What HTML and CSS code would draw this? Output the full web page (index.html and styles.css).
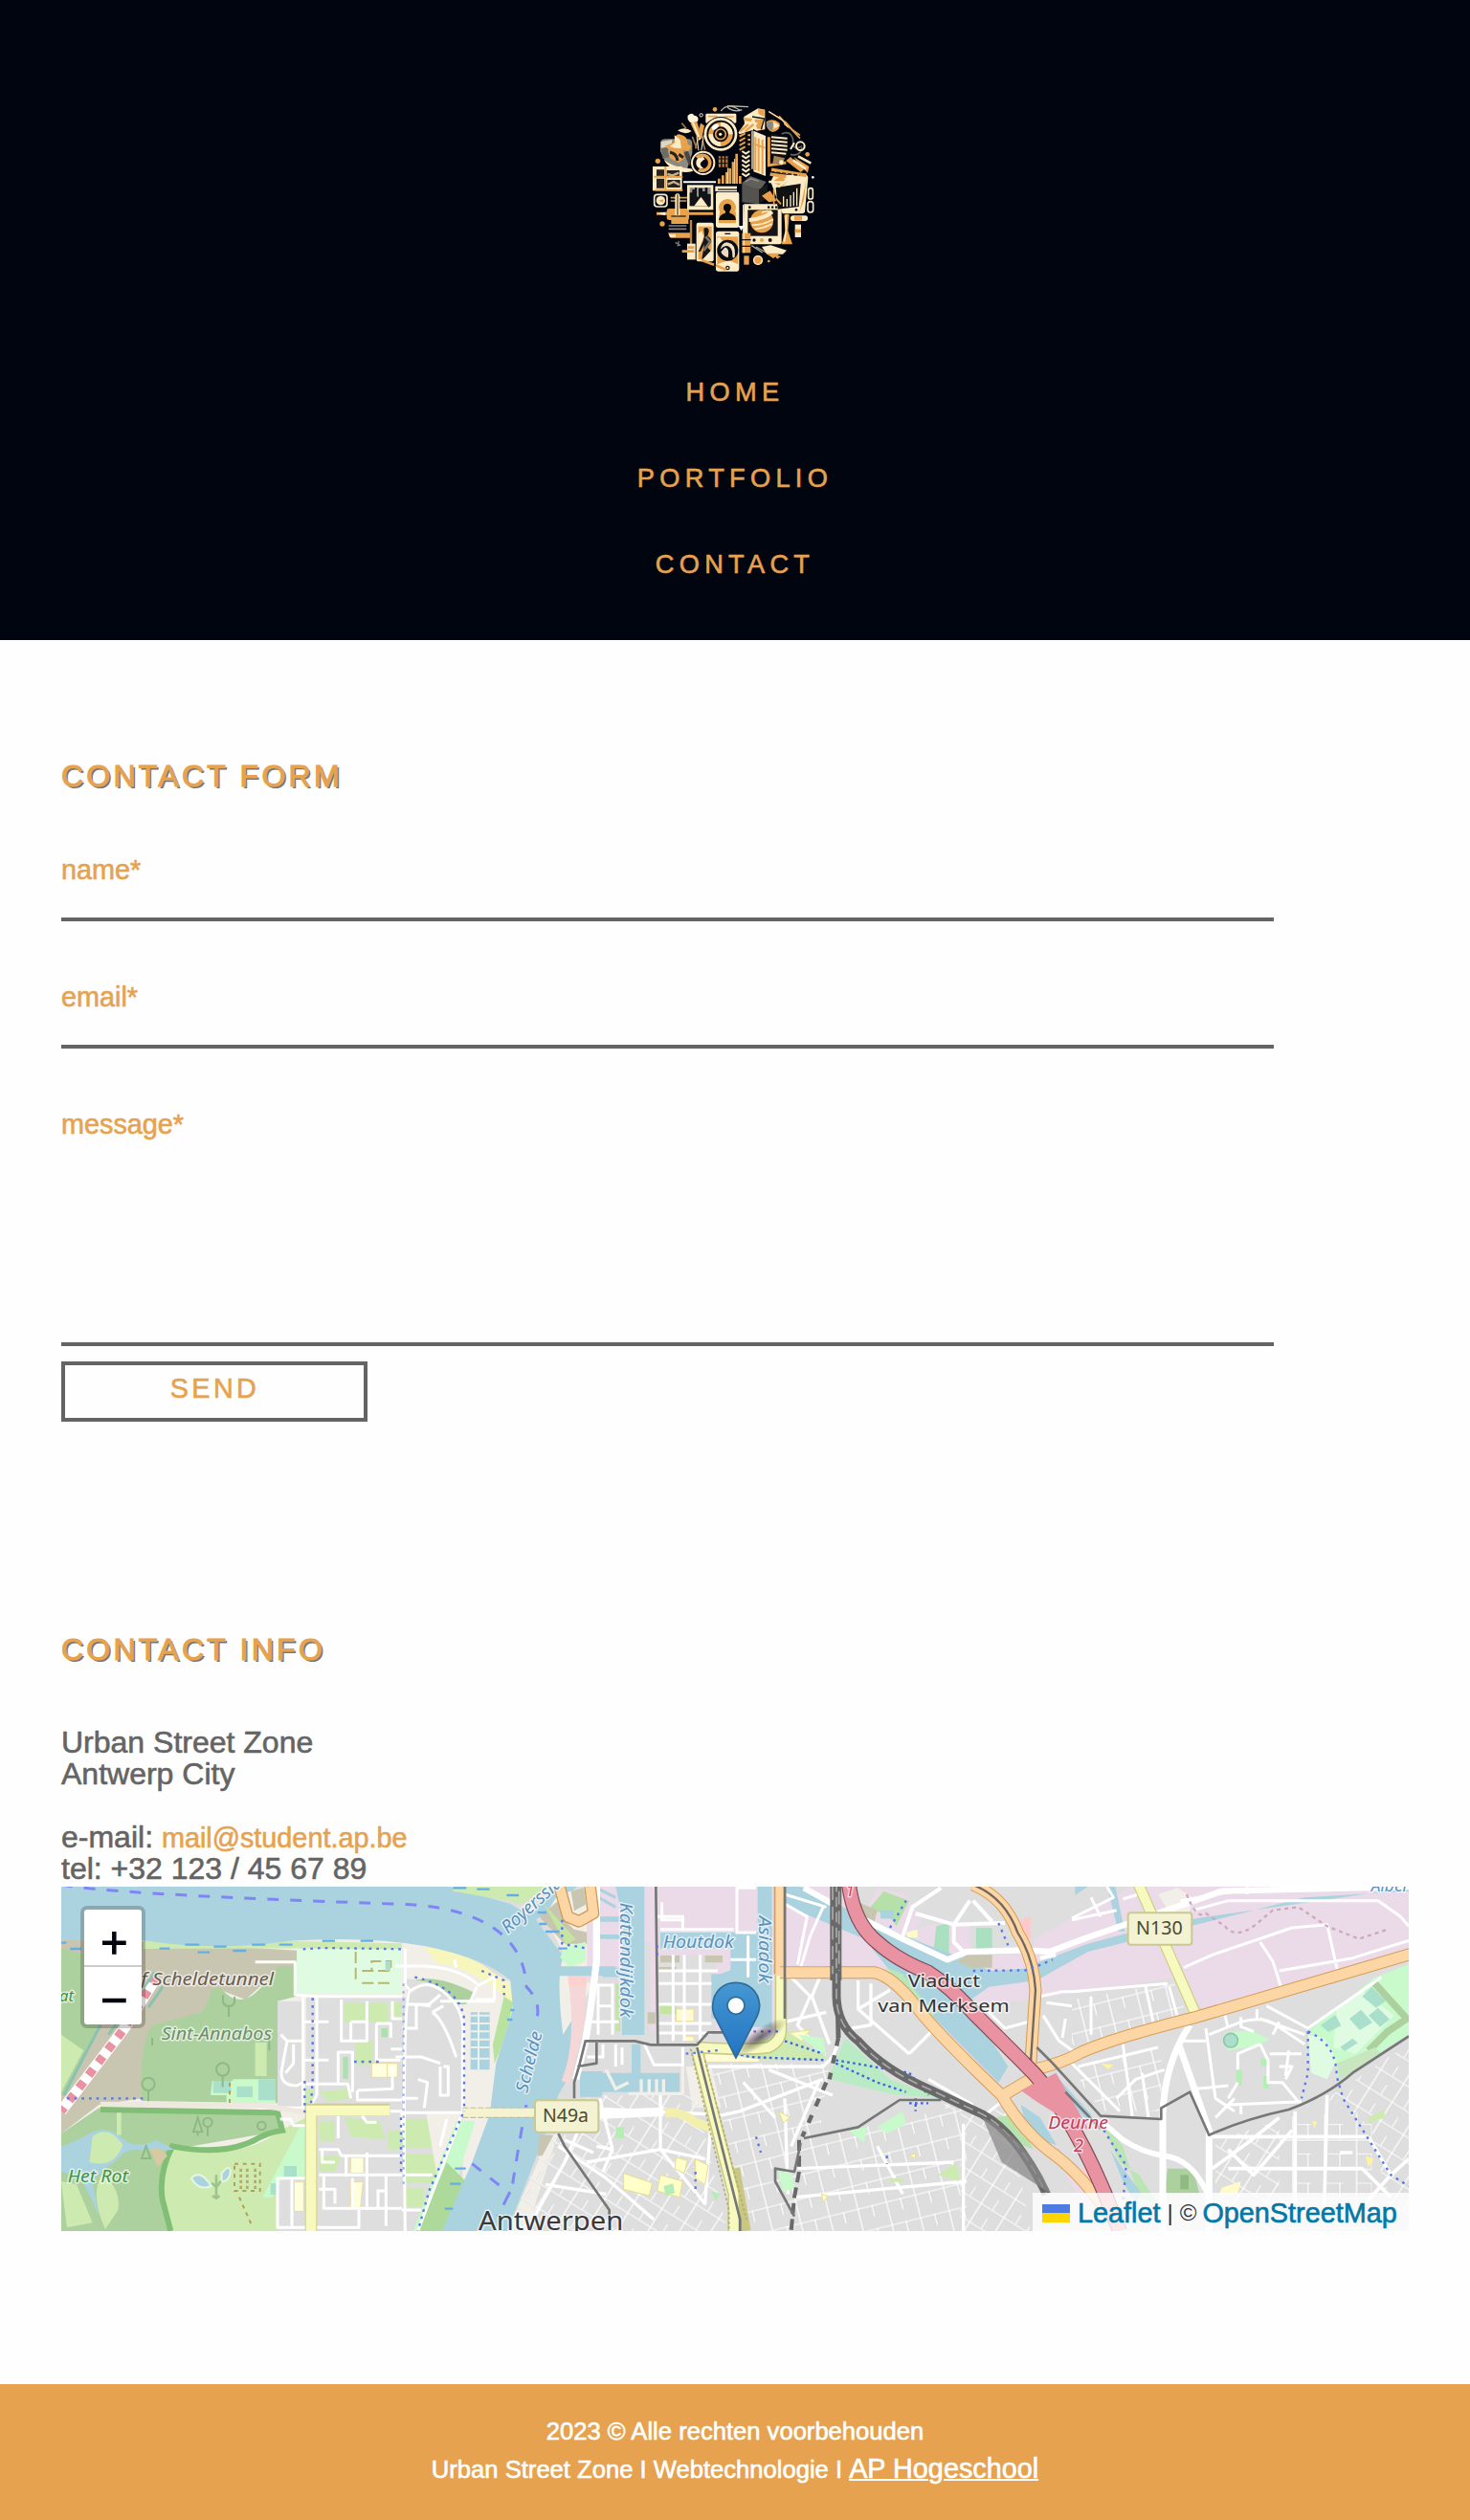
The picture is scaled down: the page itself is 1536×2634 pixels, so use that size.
FILE: index.html
```html
<!DOCTYPE html>
<html lang="nl">
<head>
<meta charset="utf-8">
<title>Urban Street Zone - Contact</title>
<link rel="stylesheet" href="styles.css">
</head>
<body>
<header class="site-header">
<svg class="logo" viewBox="-6 0 660 630" role="img" aria-label="Urban Street Zone">
  <!-- camera and top row -->
  <g stroke-linejoin="round">
  <circle cx="261" cy="73" r="7" fill="#e9a24c"/>
  <path d="M280 78Q300 50 340 76M300 62l66 3M300 66q20 18 46 8" fill="none" stroke="#bbb6a6" stroke-width="4"/>
  <path d="M352 96l44-26 22 4v62l-26 4-38-20z" fill="#fdebc6"/>
  <path d="M396 72l20 2v22l-18-8zM350 98l28 4-4 10-22-4zM385 104h26v30h-18z" fill="#e9a24c"/>
  <path d="M378 96l38 6-10 34" fill="none" stroke="#141414" stroke-width="4"/>
  <path d="M334 146l20-28 42-4-20 30-36 8z" fill="#fdebc6"/><path d="M340 142l26-22M356 142l26-22" stroke="#e9a24c" stroke-width="7"/>
  <rect x="232" y="86" width="96" height="30" rx="4" fill="#fdebc6"/>
  <path d="M240 95h28M290 96h30" stroke="#e9a24c" stroke-width="5"/>
  <circle cx="279" cy="151" r="55" fill="#080a10"/><circle cx="279" cy="151" r="48" fill="none" stroke="#fdebc6" stroke-width="8"/>
  <circle cx="279" cy="151" r="38" fill="#e9a24c"/><path d="M279 113a38 38 0 0 1 38 38h-20a20 20 0 0 0-18-20zM279 189a38 38 0 0 1-38-38h18a20 20 0 0 0 20 20z" fill="#fdebc6"/>
  <circle cx="279" cy="151" r="24" fill="#0a0a10"/><circle cx="279" cy="151" r="16" fill="none" stroke="#e9a24c" stroke-width="5"/><circle cx="278" cy="151" r="5" fill="#fdebc6"/><ellipse cx="262" cy="128" rx="12" ry="7" fill="#fff" transform="rotate(-35 262 128)"/>
  <path d="M176 92q14-12 20 0q16 2 12 16q-6 12-20 8q-16-8-12-24z" fill="#fff4d9"/><path d="M184 116l20-6 18 52-12 8z" fill="#e9a24c"/><path d="M192 114l22 54" stroke="#fdebc6" stroke-width="6"/>
  <path d="M216 116l12 8-8 40-10-24z" fill="#e9a24c"/><circle cx="218" cy="91" r="5" fill="none" stroke="#fdebc6" stroke-width="3"/>
  <path d="M144 139q24-14 44 2q-20 14-44-2z" fill="#fdebc6"/><path d="M157 116l14 17M190 158l14 38M210 160l-10 36M222 170l8 30" stroke="#a77a42" stroke-width="5"/><path d="M204 158l6 44M226 154l-8 50" stroke="#fdebc6" stroke-width="3"/>
  <path d="M430 80l54 34 36 42M462 94l66 70M478 118l50 36" fill="none" stroke="#e9a24c" stroke-width="5"/><path d="M430 80l40 24 20 26" fill="none" stroke="#fdebc6" stroke-width="3"/>
  <path d="M422 112q20-14 42 4q4 22-22 28q-22-6-20-32z" fill="#e9a24c"/><path d="M424 113q18-8 20 6l-4 22q-20-10-16-28z" fill="#8a8a84"/><path d="M444 110l20 14-18 10z" fill="#fdebc6"/>
  <path d="M470 150q28-14 36 18q-2 40 28 20M498 214q30 8 36-22" fill="none" stroke="#65645e" stroke-width="5"/><circle cx="529" cy="188" r="13" fill="none" stroke="#fdebc6" stroke-width="6"/><path d="M510 178l-12 20" stroke="#fdebc6" stroke-width="6"/>
  </g>
  <!-- towers -->
  <path d="M382 140l38 16v126l-38-14z" fill="#fdebc6"/><path d="M388 160v104M398 164v104M410 168v108" stroke="#e9a24c" stroke-width="6"/><path d="M384 182l34 12" stroke="#e9a24c" stroke-width="6"/>
  <path d="M334 152l44-14v138l-36-4z" fill="#0b0c10"/><path d="M378 140v120" stroke="#fdebc6" stroke-width="4"/>
  <path d="M338 158l18-10M338 172l18-10M338 186l18-10M338 200l18-10M364 154h8M364 168h8M364 182h8" stroke="#e9a24c" stroke-width="6"/>
  <path d="M346 204l12 8 12-8M346 218l12 8 12-8M346 232l12 8 12-8M346 246l12 8 12-8M346 260l12 8 12-8M346 274l12 8 12-8" fill="none" stroke="#fdebc6" stroke-width="6"/>
  <path d="M424 158l16-12 50 20v48l-20 26-46-28z" fill="#0e0d0d"/><path d="M438 160l50 4M438 172l50 4M438 184l50 4M438 196l50 4M438 208l46 4" stroke="#fdebc6" stroke-width="6"/><path d="M430 160v88l54-8" fill="none" stroke="#e9a24c" stroke-width="9"/>
  <path d="M446 218l34 8-8 22-30-6z" fill="#a18259"/><circle cx="469" cy="239" r="7" fill="#fdebc6"/>
  <path d="M484 234l14-12 42 40-10 8zM508 222l48 30-4 20-30-30z" fill="#e9a24c"/><path d="M506 232l40 28M522 220l40 22" stroke="#fdebc6" stroke-width="8"/><circle cx="551" cy="214" r="7" fill="#e9a24c"/>
  <!-- figure with hat -->
  <path d="M90 180q0-14 16-14h70q14 0 14 14v30l-16 50h-32l-36-20-16-36z" fill="#8d8a80"/><path d="M92 174l36-6-4 20-32 6z" fill="#ddd7c6"/><path d="M92 196l20-4 6 30-20 6z" fill="#6d6b66"/>
  <path d="M132 176q4-30 22-24q22 4 22 30l12 6q-8 22-20 14l-50-2-14-12z" fill="#e9a24c"/><path d="M134 154l18 14 4 26q-20 4-36-6l16-10z" fill="#fdebc6"/>
  <path d="M114 202l48-2 4 26-18 14-28-14z" fill="#e9a24c"/><path d="M120 208q20 2 24 26M148 214l14 10" fill="none" stroke="#222" stroke-width="9"/><path d="M102 232q32 26 100 28q-20 16-58 6q-30-10-42-34z" fill="#fdebc6"/><path d="M170 206l16 40" stroke="#4a4742" stroke-width="14"/>
  <circle cx="82" cy="235" r="8" fill="#e9a24c"/>
  <circle cx="224" cy="241" r="40" fill="#0a0b11"/><circle cx="224" cy="241" r="35" fill="none" stroke="#fdebc6" stroke-width="6"/><path d="M204 224a24 24 0 1 1 6 38" fill="none" stroke="#e9a24c" stroke-width="11"/><path d="M224 222q-24 0-22 22q4 18 24 14q-16-10-8-20q8-8 16-2z" fill="#fdebc6"/><circle cx="230" cy="238" r="8" fill="#080910"/>
  <!-- bars -->
  <path d="M276 220v34M287 220v34M298 220v34" stroke="#b37b3a" stroke-width="7"/><path d="M270 228h32M270 242h32" stroke="#14100a" stroke-width="3"/>
  <path d="M274 306v-16M286 306v-26M298 306v-36M308 306v-48M318 306v-68M329 306v-94M340 306v-24" stroke="#e9a24c" stroke-width="8"/><path d="M302 306v-50M323 306v-78" stroke="#fdebc6" stroke-width="3"/>
  <path d="M162 301h102" stroke="#fff" stroke-width="6"/>
  <!-- left shelf, clock, tools -->
  <path d="M66 252h92v76H66z" fill="#fdebc6"/><path d="M78 262h24v20H78zM78 290h24v30H78zM110 264h40v22h-40zM112 294h40v24h-40z" fill="#25221f"/><path d="M74 326h86M70 284h90M106 252v76" stroke="#e9a24c" stroke-width="6"/><path d="M112 276l16 4 20-8M114 308l18-8 18 10" stroke="#c9b48c" stroke-width="7" fill="none"/>
  <rect x="71" y="340" width="40" height="38" rx="9" fill="none" stroke="#fdebc6" stroke-width="5"/><circle cx="91" cy="359" r="14" fill="#fdebc6"/><path d="M83 359l16-4v10z" fill="#e9a24c"/>
  <path d="M122 350h52M122 360h50" stroke="#c89a5a" stroke-width="5"/><path d="M78 400h178" stroke="#e9a24c" stroke-width="9"/><path d="M80 400l26-5v10z" fill="#fff"/><rect x="110" y="384" width="70" height="36" rx="8" fill="#e9a24c"/><rect x="124" y="400" width="54" height="32" fill="#e9a24c"/><rect x="136" y="337" width="15" height="72" rx="7" fill="#fdebc6"/><path d="M144 340v64" stroke="#8b6331" stroke-width="5"/><path d="M124 408h46" stroke="#2e261c" stroke-width="4"/>
  <circle cx="96" cy="432" r="8" fill="#e9a24c"/><path d="M116 438h56M116 448h56" stroke="#85807a" stroke-width="5"/><path d="M114 460h72v16h-64z" fill="#e9a24c"/><path d="M116 464h22v10h-18z" fill="#fdebc6"/><path d="M137 490l16 10M148 486l-4 16" stroke="#7e7d7a" stroke-width="4"/><path d="M186 420v110" stroke="#b98543" stroke-width="7"/><rect x="174" y="494" width="26" height="50" fill="#fdebc6"/><path d="M158 518h38M176 506h20" stroke="#e9a24c" stroke-width="8"/>
  <!-- pictures -->
  <rect x="174" y="310" width="82" height="78" fill="#fdebc6"/><path d="M182 318h66v58h-66z" fill="#96938a"/><path d="M182 346v-12h8v-10h8v-6h6v30h6v-28h12v10h8v-12h8v20h10v38h-66z" fill="#10131a"/><path d="M196 376l16-22 8-8 8 10 12 20z" fill="#fdebc6"/><path d="M206 346l-20 28M218 342l26 36" stroke="#141414" stroke-width="7"/>
  <path d="M262 314h68v16h-68z" fill="#fdebc6"/><path d="M270 324h60" stroke="#26221d" stroke-width="4"/><rect x="264" y="332" width="73" height="112" rx="7" fill="#fdebc6"/><path d="M270 342h61v90h-61z" fill="#fff0cd"/><circle cx="300" cy="381" r="27" fill="#e9a24c"/><path d="M276 394h51v36h-55z" fill="#e9a24c"/><circle cx="300" cy="381" r="12" fill="#090a0c"/><path d="M294 388h13v10q20 4 20 22h-54q2-18 21-22z" fill="#090a0c"/>
  <path d="M346 304l26-22 50 18-18 24-50-6z" fill="#605f5b"/><path d="M346 306l54 18v46l-54-6z" fill="#55534f"/><path d="M400 324l26-18v46l-26 16z" fill="#1a1a1b"/><path d="M356 300l18-10 24 8" fill="none" stroke="#9b968d" stroke-width="4"/>
  <path d="M352 370h112q6 0 6 6v114q0 6-6 6H356q-6 0-6-6z" fill="#fdebc6"/><path d="M364 388h94v82h-94z" fill="#151313"/><circle cx="408" cy="424" r="36" fill="#e9a24c"/><path d="M368 414q48-4 68-26l8 12q-26 22-76 26z" fill="#fdebc6"/><path d="M378 436q34 0 66-18M386 448q28-2 54-16M408 398q18-14 34 0" stroke="#fdebc6" stroke-width="5" fill="none"/><circle cx="370" cy="380" r="4" fill="#15130f"/><path d="M426 380h30" stroke="#1a1510" stroke-width="7" stroke-dasharray="7 5"/><circle cx="384" cy="483" r="5" fill="#111"/><circle cx="408" cy="483" r="6" fill="#e9a24c"/><circle cx="434" cy="483" r="6" fill="#111"/><path d="M350 372v118" stroke="#fff" stroke-width="3"/>
  <!-- tablet on the right -->
  <path d="M436 300l10-22 98 0q9 0 9 10l-10 106q-2 6-10 6h-60z" fill="#fdebc6"/><path d="M438 262l110 18M434 276l50 8" stroke="#e9a24c" stroke-width="11"/><path d="M436 268l90 12" stroke="#1d1914" stroke-width="4" stroke-dasharray="12 6"/><path d="M452 318l78-12-6 72-66 8z" fill="#111"/><path d="M476 378v-32M487 378v-24M498 378v-36M508 376v-44M518 376v-56" stroke="#fdebc6" stroke-width="4"/><path d="M440 300l28-18 20 16-16 18zM548 290l-8 68-14 38" fill="#e9a24c"/><path d="M430 300l48 2-18 14M470 308l20-18" stroke="#fdebc6" stroke-width="7" fill="none"/>
  <path d="M408 344l26-16 20 32-24 4z" fill="#e9a24c"/><path d="M446 322v48M452 352l16 18" stroke="#e9a24c" stroke-width="5"/><rect x="554" y="320" width="14" height="34" rx="7" fill="none" stroke="#fdebc6" stroke-width="5"/><rect x="552" y="362" width="17" height="34" rx="8" fill="none" stroke="#fdebc6" stroke-width="5"/><circle cx="568" cy="286" r="4" fill="#fff"/><circle cx="516" cy="388" r="4" fill="#111"/>
  <path d="M478 404q12-6 16 0l-4 50 14 42h-34l12-44z" fill="#e9a24c"/><path d="M484 404v52l-6 34" stroke="#fdebc6" stroke-width="5" fill="none"/><rect x="498" y="406" width="54" height="17" rx="8" fill="#fdebc6"/><path d="M510 406h24v16h-24z" fill="#e9a24c"/><rect x="512" y="434" width="19" height="40" fill="#fdebc6"/><path d="M512 454h19" stroke="#e9a24c" stroke-width="11"/>
  <!-- lower row -->
  <rect x="203" y="428" width="54" height="122" rx="6" fill="#fdebc6"/><path d="M209 440h42v104h-42z" fill="#e9a24c"/><path d="M226 446q16-6 16 10l-4 14q14 8 10 20l-10 16 14 14-20 22h-12l8-46-12 22-8 2 16-34 4-16z" fill="#17171a"/><path d="M208 462l12-8 6 18-18 50zM220 546l34-36v36z" fill="#fdebc6"/><path d="M232 472l14 16-20 28" fill="none" stroke="#76726a" stroke-width="8"/>
  <rect x="264" y="455" width="73" height="126" rx="8" fill="#fdebc6"/><rect x="268" y="472" width="65" height="86" fill="#e9a24c"/><path d="M270 558h62l-28-12zM276 474l10 12-18 20v-30z" fill="#fff0cd"/><circle cx="301" cy="515" r="33" fill="#090b0f"/><path d="M278 512q10-34 36-16q18 14 0 44q6-24-8-36q-14-8-28 8zM292 506q16 0 10 32q-18-6-22-18z" fill="#e9dbc2"/><path d="M308 496q18 16 12 42" fill="none" stroke="#fdebc6" stroke-width="5"/><path d="M292 463h18" stroke="#1a1611" stroke-width="4"/><circle cx="301" cy="570" r="7" fill="#1a1611"/><circle cx="301" cy="570" r="3" fill="#fff"/>
  <path d="M334 438h18l-8 16z" fill="#fff"/><rect x="346" y="461" width="27" height="62" fill="#e9a24c"/><path d="M352 461v62" stroke="#fdebc6" stroke-width="4"/><path d="M344 482h30M344 502h30" stroke="#16120f" stroke-width="4"/><rect x="352" y="532" width="16" height="28" fill="#e9a24c"/><circle cx="396" cy="546" r="15" fill="#e9a24c"/><circle cx="396" cy="546" r="13" fill="none" stroke="#fdebc6" stroke-width="4"/>
  <path d="M376 500l34 22M390 504l32 18" stroke="#aba69c" stroke-width="4"/><path d="M408 504l28-5 50 16-12 12h-50z" fill="#fdebc6"/><path d="M420 524h48l-24 16zM448 529l20 5-12 8z" fill="#e9a24c"/><circle cx="430" cy="549" r="4" fill="#e9a24c"/><path d="M220 546l38 14M264 562l32 14" stroke="#e9a24c" stroke-width="8"/>
</svg>
<nav><ul class="menu"><li><a href="#">HOME</a></li><li><a href="#">PORTFOLIO</a></li><li><a href="#">CONTACT</a></li></ul></nav>
</header>
<main class="content">
<section class="form-section">
<h2>CONTACT FORM</h2>
<form>
<div class="field"><label>name*</label></div>
<div class="field"><label>email*</label></div>
<div class="field field-message"><label>message*</label></div>
<button class="send" type="button">SEND</button>
</form>
</section>
<section class="info-section">
<h2>CONTACT INFO</h2>
<address>Urban Street Zone<br>Antwerp City<br><br>e-mail: <a href="#">mail@student.ap.be</a><br>tel: +32 123 / 45 67 89</address>
<div class="map">
<svg class="map-canvas" viewBox="42 36 4224 1080">
  <defs>
    <pattern id="grid-a" width="92" height="74" patternUnits="userSpaceOnUse" patternTransform="rotate(-14)"><path d="M0 3H92M3 0V74M48 0V38" stroke="#d0d0d0" stroke-width="8"/><path d="M0 3H92M3 0V74M48 0V38" stroke="#fafafa" stroke-width="5"/></pattern>
    <pattern id="grid-b" width="84" height="68" patternUnits="userSpaceOnUse" patternTransform="rotate(32)"><path d="M0 3H84M3 0V68M44 34V68" stroke="#d0d0d0" stroke-width="8"/><path d="M0 3H84M3 0V68M44 34V68" stroke="#fafafa" stroke-width="5"/></pattern>
    <pattern id="grid-c" width="100" height="92" patternUnits="userSpaceOnUse"><path d="M0 3H100M3 0V92M50 46V92M3 46H60" stroke="#d0d0d0" stroke-width="8" fill="none"/><path d="M0 3H100M3 0V92M50 46V92M3 46H60" stroke="#fafafa" stroke-width="5" fill="none"/></pattern>
    <path id="moto" d="M2510 20Q2524 150 2600 210Q2660 265 2760 305Q2830 350 2900 430L3060 590Q3220 740 3360 1116"/>
    <path id="ring" d="M2295 305H2590Q2650 318 2720 410Q2790 500 2990 690Q3060 810 3160 880Q3240 940 3340 1080"/>
    <path id="east" d="M3090 610Q3180 590 3240 555Q3340 510 3600 445L4060 310L4280 245"/>
    <path id="north" d="M2900 30Q3000 70 3040 180Q3090 260 3096 360L3080 600"/>
    <path id="rail" d="M2472 20V380Q2474 470 2540 520Q2620 610 2760 670L2930 750Q3040 810 3130 1000"/>
  </defs>
  <rect x="42" y="36" width="4224" height="1080" fill="#dedede"/>
  <!-- land use, west bank -->
  <path d="M42 200H1200L1460 340V900L1200 1116H42z" fill="#f2efe9"/>
  <path d="M42 200L300 208L780 236V285L720 300L620 390L540 360L480 430L330 480L294 700L160 720L42 810z" fill="#c8c5b0"/>
  <path d="M42 228Q100 250 165 256L175 430L60 690H42z" fill="#add19e"/><path d="M42 500l70 50-70 130z" fill="#cdebb0"/>
  <path d="M540 350Q600 430 670 350L725 285H778V380L720 395V715L294 708V590Q300 500 330 470L480 430Q510 395 512 360z" fill="#add19e"/>
  <path d="M160 730L720 738L740 800L390 860L385 1116H42V810z" fill="#add19e"/>
  <path d="M395 852Q600 900 730 800L810 760V1116H392Q330 1010 375 900z" fill="#cdebb0"/>
  <path d="M165 735L720 745L735 800Q690 805 640 835Q540 880 390 850Q345 940 360 1020L385 1116" fill="none" stroke="#82bf76" stroke-width="18"/>
  <path d="M300 220L780 218L1110 225" stroke="#cdebb0" stroke-width="22" fill="none"/>
  <path d="M780 232H1110V370H780z" fill="#dffce2"/><path d="M720 395H800V740H720z" fill="#dedede"/><path d="M810 382H1300V1116H720V950H805z" fill="#dedede"/>
  <path d="M650 525h36v105h-36z" fill="#cdebb0"/><path d="M515 645H580V640H714V715H560V690H510z" fill="#c8facc"/><path d="M518 645h56v38h-56zM592 662h50v34h-50zM660 640h54v66h-54z" fill="#aae0cb"/>
  <path d="M790 790h20l-5 160h-70l-30 60h-32z" fill="#c8facc"/><path d="M740 912h40v36h-40zM698 966h24v36h-24z" fill="#aae0cb"/>
  <path d="M42 850Q90 835 130 810Q190 780 240 830Q280 860 340 830L395 860Q330 870 280 860Q240 860 220 890Q160 930 140 960Q150 1020 160 1070Q120 970 90 940Q42 930 42 930z" fill="#aad3df"/><path d="M140 820Q190 780 235 845Q210 920 130 900z" fill="#cdebb0"/><path d="M170 940Q230 980 220 1050L180 1110Q130 1000 170 940M42 960L90 970L140 1090L60 1105" fill="#cdebb0"/><path d="M320 860q30-14 55 20l-30 34z" fill="#d7c9a1"/><path d="M216 745h14v70h-14z" fill="#cdebb0"/>
  <path d="M450 950q28-30 62 25q-40 16-62-25zM545 935q22-30 28-8q-4 34-28 34z" fill="#aad3df" stroke="#e6f5dd" stroke-width="6"/>
  <path d="M585 905h80v85h-80zM600 1010l40 90M570 650v70" fill="none" stroke="#b59f52" stroke-width="6" stroke-dasharray="12 14"/><path d="M605 920v65M625 920v65M650 920v65" stroke="#bfa75c" stroke-width="8" stroke-dasharray="10 8"/><path d="M528 940v75m-14-50l14 14 14-20m-26 46l12 8 10-8" stroke="#9cc48f" stroke-width="8" fill="none"/>
  <path d="M965 240v100M985 338h90M985 300h90V270h-60v30" fill="none" stroke="#b9b66f" stroke-width="6" stroke-dasharray="36 14"/><path d="M1058 270h16v30h-16z" fill="#aae0cb"/>
  <g fill="#cdebb0"><path d="M930 400h135v60H930zM965 520h55v75h-55zM1075 400h32v55h-32zM805 670h30v50h-30zM850 680l90-10 10 30-70 10zM850 770h50v65h-50zM930 760l110 10 20 60-110-10zM850 880h70l-20 50h-50zM1065 800h60v60h-60zM1120 764h160v90h-160zM1120 875h120v90h-120zM1118 980h60v60h-60z"/></g>
  <g fill="#feffdc" stroke="#eed9a8" stroke-width="3"><path d="M1015 590h82v44h-82zM772 962h30v92h-30zM950 885h40v50h-42zM948 962h40l-8 80h-30zM1243 515h46v36h-46zM1064 590h32v44h-32z"/></g>
  <path d="M1045 480h20v28h-20zM925 570h16v68h-16z" fill="#aedfae"/>
  <path d="M1110 310Q1290 300 1300 420H1330V640L1290 700V1116H1250Z" fill="#f2efe9"/>
  <path d="M1125 325Q1290 340 1300 450V740H1125z" fill="#dedede"/>
  <path d="M1150 330Q1220 310 1340 370L1310 405H1270Q1230 330 1150 330z" fill="#add19e"/><path d="M1180 225Q1320 240 1400 310L1455 345V420L1430 380Q1330 290 1220 275z" fill="#f7f6bd"/>
  <path d="M1430 380L1460 400Q1430 530 1400 590L1395 530z" fill="#b9e29f"/>
  <path d="M1280 770h60l-50 160-45 70-60 116h-40z" fill="#c8facc"/><path d="M1250 900L1310 960L1260 1116H1160z" fill="#add99a"/>
  <path d="M1325 430h60v180h-60z" fill="#aad3df"/><path d="M1325 440h60M1325 465h60M1325 490h60M1325 515h60M1325 540h60M1325 575h60M1350 410v200" stroke="#eef0ec" stroke-width="6"/>
  <!-- streets, west bank -->
  <g fill="none" stroke="#fff" stroke-width="9" stroke-linejoin="round">
   <path d="M650 272H775V375L840 380H1110M800 380V730H660M843 385V690L820 730M800 460H880M805 580H880M920 390V520H1000V395M950 460H1000M950 460V520M1030 465H1075V510M1030 465V580H1105M910 650V555H955V680M810 655H940L950 700M970 675V705H1110M970 675L1080 670V600M1080 395V450H1110M1110 545H1075"/>
   <path d="M730 500L750 520H800M750 520L735 600Q720 660 780 660L800 650M770 530V590L745 620M728 765H760L770 785H810M910 755V825M850 740H1110V800M985 755L1000 775H1030M850 860H910L920 880H1110M850 940H1110M935 880V945M1000 870V1050M850 985H900V1030M865 945V1045H960M955 950V1045H1110M1030 990H1065M1060 945V1100M975 1050V1105H720V950H810M765 955V1105M860 860V900H900M1035 1040V990"/>
   <path d="M1120 230V345L1135 360Q1110 400 1120 1116M1090 285H1180Q1290 290 1350 345L1400 320V390H1340M1280 290L1275 265M1230 395H1400M1345 350L1325 395M1135 365Q1200 310 1270 395Q1310 440 1300 520V750M1130 405H1195L1230 375M1155 480V405L1200 410M1160 480H1110M1205 430Q1240 450 1280 570M1205 430L1240 410M1240 600H1255V690H1230V600M1090 570H1170L1230 590M1160 640L1190 650L1180 730M1160 700H1110M1110 745H1300L1200 1010L1160 1116M1110 940H1205M1110 1050H1170M1250 765L1230 850"/>
  </g>
  <path d="M165 718L660 722L720 730L800 742" fill="none" stroke="#eee8df" stroke-width="16"/>
  <path d="M825 1116V735H1072" fill="none" stroke="#d0cc85" stroke-width="38"/><path d="M825 1116V738H1072" fill="none" stroke="#f8f9bd" stroke-width="32"/>
  <path d="M340 320L240 480L42 740" fill="none" stroke="#fff" stroke-width="34"/><path d="M340 320L240 480L42 740" fill="none" stroke="#e892a2" stroke-width="28" stroke-dasharray="24 26"/>
  <path d="M360 350L315 415M335 305L190 500M165 470L50 690" stroke="#89c2b0" stroke-width="9" fill="none"/>
  <!-- Schelde -->
  <path d="M42 36H1260L1450 90L1530 140L1620 260L1640 350L1650 500L1640 620L1600 690L1560 810L1440 1116H1235L1330 900L1385 750L1405 590L1458 420L1450 330Q1370 260 1180 222Q1000 190 760 206Q520 240 300 205L42 204z" fill="#aad3df"/>
  <path d="M1270 36H1600L1530 60L1490 90Q1440 80 1270 50z" fill="#cdebb0"/><path d="M1430 190L1600 36H1660L1530 140L1590 240H1530z" fill="#aad3df"/>
  <path d="M1555 130L1600 60L1700 36V360L1615 500Q1590 300 1620 250z" fill="#f2efe9"/><path d="M1540 130L1600 80Q1610 140 1650 170L1695 180V215H1620z" fill="#c8c5b0"/>
  <path d="M1555 90l100 110-30 20z" fill="#c3e5a0"/><path d="M1620 225l66-16v60l-50 20-30-30z" fill="#c8facc"/>
  <path d="M1635 315h55l-10 160-45 180-25-10q50-120 20-330z" fill="#f4d7d6"/><path d="M1632 315h56v30h-56z" fill="#ffd0d0"/>
  <path d="M1560 820L1540 890L1440 1116H1500L1600 810z" fill="#f2efe9"/><path d="M1540 815h45l-35 65h-15z" fill="#c8c5b0"/>
  <g fill="none" stroke="#7f86f3" stroke-width="9"><path d="M42 30Q200 60 1080 90Q1400 95 1480 260Q1500 310 1500 350Q1550 400 1530 460M1500 720Q1480 820 1455 980L1410 1070M1330 905L1450 1000" stroke-dasharray="36 36"/></g>
  <g stroke="#64aee8" stroke-width="7" fill="none"><path d="M42 212h16M70 231h35M430 218h45M520 224h40M580 237h42M640 218h42M725 218h42M350 230h32M470 242h38M860 206h40M980 206h40M1270 40h42M1345 44h40M1438 63h38M1535 117h28M1540 153h24M1560 177h44M1600 230h28M1276 920h34M1260 968h34M1244 1046h26M1440 453h16M1450 423h12"/></g>
  <path d="M1300 745H1540" stroke="#c9bd88" stroke-width="34" stroke-dasharray="18 6"/><path d="M1300 745H1540" stroke="#f5f2cf" stroke-width="27"/>
  <!-- docks and industry -->
  <path d="M1690 36H3000L2600 310H2310L2290 560L2080 490H1890V210H1690z" fill="#ebdbe8"/>
  <path d="M1690 36h110v300h-110z" fill="#ebdbe8"/><path d="M1780 36h90v465h-70V320h-60v-30h60V200h-90v-14h90v-40h-90v-16h90z" fill="#aad3df"/><path d="M1530 286h250v30h-250z" fill="#aad3df"/><path d="M1690 50l90 50M1720 40l60 30" stroke="#aad3df" stroke-width="9"/>
  <path d="M1720 320h76v190h-100zM1915 250h180v270h-180zM1690 530h350v75h-350z" fill="#dedede"/>
  <path d="M1920 180H2190V290L2165 300V340H2150L2100 470L2080 320L2160 290V230H1920z" fill="#aad3df"/><path d="M2080 310h90v140h-90zM2225 36h45v440h-120V320h-10V180h85z" fill="#aad3df"/>
  <path d="M2220 40h-60v140h60M2195 190v130M2140 265h80M1920 170h230M1990 170v-40h-85M1925 85v55h70" fill="none" stroke="#fff" stroke-width="9"/>
  <path d="M1668 615h70v80h-70zM1730 620h250v60h-250zM1830 530h28v100h-28z" fill="#aad3df"/><path d="M1860 640v40M1885 640v40M1908 640v40M1930 640v40M1820 685h170V590M1750 610l30 60 40-20" stroke="#f2efe9" stroke-width="10" fill="none"/>
  <path d="M1970 420h55v38h-55zM1995 505h30v16h-30zM2060 560h170v26h-170z" fill="#fffbd5" stroke="#f0dc9c" stroke-width="3"/><path d="M1920 252h60v22h-60zM2060 252h55v22h-55zM1915 288h55v16h-55zM1880 430h24v36h-24z" fill="#c8c5b0"/><path d="M1920 405h50v30h-50zM1780 340h14v150h-14z" fill="#c3e5a0"/>
  <g fill="none" stroke="#fff" stroke-width="9"><path d="M1915 300H2100M1915 340H2080M1915 405H2080M1915 465H2080M1915 495H2080M1960 250V520M1995 250V520M2045 250V520M1725 340V500M1770 340V500M1725 345H1770M1725 410H1770M1700 460H1790M1690 570H1740V530M1780 530V600M1800 540V595M1870 530L1900 595H1990V540"/></g>
  <path d="M2000 600h80l30 130h-90z" fill="#f2efe9"/>
  <!-- city streets -->
  <path d="M1540 880L1700 690H2030L2130 1116H1440z" fill="url(#grid-b)"/>
  <path d="M2070 590H2450L2420 800L2350 1116H2200L2070 600z" fill="url(#grid-a)"/><path d="M2370 830L2880 720V1116H2350z" fill="url(#grid-a)"/>
  <path d="M2660 700L3010 740L3080 1116H2860V740z" fill="url(#grid-b)"/><path d="M3210 390L3530 330L3570 440L3210 560zM3210 610L3490 540V740L3300 740z" fill="url(#grid-a)"/><path d="M3660 830L3860 770V1116H3660z" fill="url(#grid-b)"/><path d="M3860 760L4150 740V1116H3860z" fill="url(#grid-c)"/><path d="M4010 700L4266 530V1116H4220L4150 800z" fill="url(#grid-b)"/>
  <g fill="none" stroke="#fff" stroke-width="10" stroke-linejoin="round"><path d="M2070 600H2430L2460 570L2480 520M2430 640L2170 740L2080 760L2160 1116M2330 320L2390 380L2350 470L2420 550M2420 320L2395 380L2450 530M2310 460L2440 430M2540 330V420L2700 560M2580 340V470L2520 480M2540 420L2640 360M2700 560L2780 480M1680 760L1620 900L1500 1116M1730 700L1770 860L1740 930M1690 900L1920 860L2060 890M1770 860L1720 850M1920 690V860L2060 1030L2080 750L1680 730M1600 850L1750 950L1900 1080M1560 970L1750 1000M1620 830L1710 870"/><path d="M2870 780V1116M2600 850L2680 1000M2350 920L2840 900M2340 1010L2880 960M2420 640L2330 850M2310 700L2320 1000M2180 650L2280 760M2260 610L2460 690"/></g>
  <g fill="#feffc9" stroke="#e8dc8e" stroke-width="3"><path d="M1805 935l90 30-10 40-80-20zM1920 940l70 20-10 50-70-20zM1970 885l35 10-10 40-30-14zM2030 890l40 20-10 60-30-20zM2320 495l70-10-30 40zM2290 740l36 20-20 16zM2700 880l20-8v16zM2425 1000l20 6-14 20z"/></g><path d="M1930 975l30-8 5 30-28 8zM1780 790h26v35h-26zM2080 990l26 10-12 22z" fill="#b5eeb5"/>
  <path d="M2600 790l80-50 10 40-60 30zM2290 930l40 2 14 50-40 10zM2510 800l60-10-12 50z" fill="#c8facc"/><path d="M2790 940l60-40 6 60zM2640 950h40v12h-40z" fill="#cdebb0"/>
  <path d="M2110 560L2320 490L2450 580H2250z" fill="#cdebb0"/><path d="M2350 500l80 10 10 60z" fill="#c8facc"/><path d="M2460 600L2500 510L2640 640L2800 700L2660 690L2450 640z" fill="#b9ecc5"/>
  <path d="M2120 550L2200 570L2440 580M2310 520L2430 560M2470 580L2700 620L2760 690M2470 590L2600 650L2690 680M2700 715H2760M2720 700v40" stroke="#3f62e7" stroke-width="7" stroke-dasharray="8 10" fill="none"/>
  <!-- canal and east side -->
  <path d="M2500 36H3100L3140 330L2900 300L2700 230L2500 130z" fill="#dedede"/><path d="M2600 40l90 20 50 80-40 60-140-80z" fill="#ebdbe8"/><path d="M2620 50l80 30-40 80-30-40-60-10z" fill="#b5e0a8"/><path d="M2530 80l70 30-10 40-60-20z" fill="#c8c5b0"/><path d="M2610 110h40v26h-40z" fill="#aad3df"/>
  <path d="M2740 160l100-20 50 20v90l-90 10-90-70z" fill="#ebdbe8"/><path d="M2910 165h50v66h-50zM2785 160l40-10v100h-50z" fill="#aae0c0"/><path d="M2690 180l36-10v26h-30z" fill="#fffbc9"/>
  <path d="M3050 140l30-10v70h-20z" fill="#ffc9c9"/><path d="M3090 200L3400 36H4266V240L3620 420L3540 320L2940 410L2850 350L3090 300z" fill="#ebdbe8"/><path d="M3120 390L3210 378L3540 330L3580 430L3240 540L3110 590z" fill="#dedede"/><path d="M3210 390L3530 335L3570 435L3210 550z" fill="url(#grid-a)"/>
  <path d="M3480 60l60-20 50 30-20 80-40-10z" fill="#f2efe9"/>
  <path d="M2310 36H2360L2640 170Q2750 220 2900 270L3060 290L3260 215L3500 150L4266 40V50L3940 70L3500 180L3260 240L3100 330L2950 350L2880 400L3010 600L2980 650L2700 370L2680 350L2560 200L2300 90z" fill="#aad3df"/>
  <path d="M2850 265L3100 240V290L2960 300z" fill="#ebdbe8"/><path d="M2850 270l30-20h80v40h-70z" fill="#c8c5b0"/><path d="M2630 290l50 20 100 130h-40z" fill="#b8e8b8"/>
  <path d="M3220 36l40 0-40 26zM3320 36h26l30 140h-20z" fill="#aad3df"/>
  <path d="M3050 720l60 40 60 100-20 20-90-120zM3170 640l100 110-10 20-90-90z" fill="#aad3df"/><path d="M3110 640q60 20 80 60l-30 10-60-60zM2970 760l60-10 60 110-50-20z" fill="#b7e4ae"/><path d="M3150 860l110 80 40 110-70-40zM3110 830l60 20-20 50z" fill="#ebdbe8"/><path d="M3220 930l60-30 60 100v60z" fill="#ffd0d0"/>
  <path d="M3300 770L3370 850L3420 1010L3480 1030L3420 940L3360 900z" fill="#bbe5b4"/><path d="M3330 860l40 60 60 80-20 30-40-70z" fill="#aad3df"/>
  <path d="M3510 920h80l20 80h-110z" fill="#add19e"/><path d="M3550 940h26v45h-26z" fill="#8fba82"/><path d="M3680 980l60-20-10 40-60 5z" fill="#fffbc9"/>
  <path d="M3690 495l80-10 60 30-40 20-90 15z" fill="#c8facc"/><circle cx="3708" cy="518" r="22" fill="#aae0cb" stroke="#8fc6a8" stroke-width="5"/>
  <path d="M3950 490L4160 320L4266 280V500L4100 600L4040 630V590z" fill="#c8facc"/><path d="M4040 420l80-60 100 80-120 120-70-20z" fill="#dffce2"/><path d="M4080 450l36-28 36 40-40 24zM4120 380l30-30 44 44-30 22zM4140 440l30-24 36 36-30 24zM3990 470l46-32 18 34-40 20zM4050 540l40-28 16 14-40 26z" fill="#aae0cb"/><path d="M4160 340l100 110-60 40-60 60" fill="none" stroke="#add19e" stroke-width="22"/><path d="M4040 590l120-50 20 20-130 80z" fill="#c8e6c0"/><path d="M3950 500l50 10 40 70-30 60-50-20z" fill="#dffce2"/>
  <path d="M3725 610h18v50h-18zM3810 630h18v40h-18zM3802 575h20v24h-20z" fill="#b5eeb5"/><path d="M4140 760l50-25v26l-50 16z" fill="#cdebb0"/><path d="M4130 880l26 10-16 26zM3965 770l14 4-10 20zM3300 590l40 5-16 14z" fill="#fff3a0"/>
  <g fill="none" stroke="#fff" stroke-linejoin="round"><path d="M2310 60L2440 100M2310 90L2380 130L2350 280M2430 100L2390 190L2360 290M2310 290H2440" stroke-width="9"/><path d="M2370 40L2460 90M2540 130L2680 200L2820 265L2880 240L3060 235L3140 240L3260 195L3420 140L3680 50L4266 36" stroke-width="19"/><path d="M2680 190L2710 100L2800 40M2720 120L2840 155L3000 150M2840 155L2890 80M2900 80L2960 145M2840 160V210L2870 240M3110 260L3160 250" stroke-width="12"/><path d="M3550 80L3720 50M3590 110L3700 80H4170L4240 130L4266 160M3560 290L3650 250L3900 165L4010 155L4045 310M3800 210L3840 270L3865 350M3860 300L4090 260L4266 205M3210 135L3340 70L3320 36M3210 140L3350 110M3270 70L3300 130M3370 75L3420 60M3760 36V60" stroke-width="9"/><path d="M3110 380L3180 365H3210L3510 340M3110 450L3000 480L2940 420M3120 440L3170 520L3240 570M3130 400L3210 410M3180 510L3190 450M3270 380V500M3440 345L3465 460M3515 350L3540 440" stroke-width="9"/><path d="M3580 470Q3500 590 3495 750V1116M3545 530L3640 800V1116" stroke-width="21"/><path d="M3300 770L3370 830Q3430 870 3500 880Q3590 890 3640 1010" stroke-width="17"/><path d="M3560 520H3630M3630 480L3660 700L3720 740M3690 440L3700 480M3740 445V475L3780 490M3640 500L3740 460Q3810 440 3850 470L3940 530M3800 450L3940 500M3820 410L3950 480L4180 320M3790 420V450M3860 460L3840 500M3800 530L3825 580V650H3870L3920 710M3730 610V560L3800 530M3730 650L3700 700M3700 720L3930 710M3830 560H3930M3890 550L3880 630M3740 720V750M3860 600h40l-20 40M3600 670L3700 660M3660 760L3720 700" stroke-width="9"/><path d="M3910 740V1030M4010 690L4000 1090M4140 820H3640M4140 820L4210 940L4266 890M3700 920H4120L4210 1010M3650 920L3760 840L3860 760M3700 860L3780 940L3900 800M4050 870H4090M4210 940L4120 1040" stroke-width="11"/><path d="M3210 590L3360 740M3230 600L3480 540M3350 700L3410 640L3500 610M3370 530L3400 760M3430 620L3450 760M2940 750L3040 670M2990 690L2940 640M2760 640L2900 720" stroke-width="9"/></g>
  <path d="M3570 60q30 80 60 60l60 40q30 40 90 0l60-50 80-10 90 60 100 40 90-30" fill="none" stroke="#cda9be" stroke-width="7" stroke-dasharray="12 12"/>
  <!-- main roads -->
  <g fill="none" stroke-linejoin="round">
  <path d="M1720 36V270L1700 430L1685 520L1655 640" stroke="#fff" stroke-width="22"/><path d="M1730 750L1930 742" stroke="#fff" stroke-width="28"/><path d="M1935 745Q1990 740 2030 775L2100 800" stroke="#f3f0ad" stroke-width="28"/>
  <path d="M1604 36L1630 130L1665 145L1710 120L1700 36" stroke="#d39b54" stroke-width="38"/><path d="M1604 36L1630 130L1665 145L1710 120L1700 36" stroke="#fcd6a4" stroke-width="30"/><path d="M1640 50l40-10 10 50-40 22z" fill="#c8c5b0"/>
  <path d="M2030 540Q2200 550 2260 540Q2300 520 2298 480V300M2035 550L2150 1000V1116M2150 920L2185 1116" stroke="#c9c780" stroke-width="38"/><path d="M2030 540Q2200 550 2260 540Q2300 520 2298 480V300M2035 550L2150 1000V1116" stroke="#f7fabf" stroke-width="29"/><path d="M2295 36V310" stroke="#d39b54" stroke-width="38"/><path d="M2295 36V315" stroke="#fcd6a4" stroke-width="28"/>
  <path d="M3415 20L3600 440" stroke="#d0cc85" stroke-width="36"/><path d="M3415 20L3600 440" stroke="#f7fabf" stroke-width="29"/>
  <g stroke="#d79c56" stroke-width="39"><use href="#ring"/><use href="#east"/><use href="#north"/><path d="M2995 690L3080 640"/></g><g stroke="#fcd6a4" stroke-width="33"><use href="#ring"/><use href="#east"/><use href="#north"/><path d="M2995 690L3080 640"/></g>
  <g stroke="#75675f"><use href="#north" stroke-width="7"/></g>
  <use href="#moto" stroke="#7e4c56" stroke-width="48"/><use href="#moto" stroke="#e892a2" stroke-width="41"/><path d="M3050 675Q3150 750 3265 800L3160 620" fill="#e892a2"/>
  <g stroke="#696969"><use href="#rail" stroke-width="27"/><path d="M2470 36V330" stroke-width="36"/><path d="M2476 400L2478 510" stroke-width="15"/><path d="M2478 510L2450 640M2440 650L2365 820" stroke-width="13" stroke-dasharray="26 30"/><path d="M2355 830V930L2340 1010L2330 1116" stroke-width="12" stroke-dasharray="34 16"/></g><g stroke="#aaa"><use href="#rail" stroke-width="5" stroke-dasharray="32 16"/><path d="M2460 36V310M2480 50V300" stroke-width="5" stroke-dasharray="42 20"/></g><path d="M2930 760Q3070 820 3145 1000L2990 900z" fill="#888" opacity=".72"/>
  <g stroke="#777" stroke-width="8"><path d="M1650 700V650L1665 600L1685 520H1840L1890 532H2035L2070 493H2150M1906 36L1912 530M2310 36V450M2035 540L2170 1080V1116M1720 525V590L1660 600M1600 810L1620 850L1760 1050V1080M2800 705H2670L2540 790L2370 825M2360 840L2340 930L2280 920V960L2340 1070M3100 540L3150 590L3300 755L3490 765V730L3580 680L3640 815Q3750 765 3890 735Q4010 690 4090 620L4266 505M3190 680L3300 795"/></g>
  <g stroke="#b1ad75" stroke-width="5" stroke-dasharray="8 7"><path d="M2015 545L2135 1050V1116M2060 580L2190 1080"/></g>
  <g stroke="#5577ea" stroke-width="7" stroke-dasharray="8 15"><path d="M830 385V640L825 720M805 645V745M1107 760V930M960 585H1040M60 700H300M800 232L860 228L1110 232M1150 320Q1290 350 1305 450V740M1300 750L1195 990L1160 1116M1360 300L1430 330V380M1612 140V215L1690 230M1910 220v40M2000 560L2110 548M2120 490H2300M2900 300L3070 298L3150 265M2640 165L2690 80M2980 150L3010 220M3950 490V620L3930 700M3950 490Q4040 530 4040 630L4060 700L4210 940L4266 975M3310 800L3380 910L3370 1030M2030 930V1000M2220 820L2235 870M2630 880v25"/><path d="M1115 340V980" opacity=".5"/></g>
  </g>
  <g fill="none" stroke="#8cb984" stroke-width="6"><path d="M550 375q-6 36 17 36t18-30M567 410v34"/><circle cx="548" cy="609" r="20"/><path d="M548 630v34"/><circle cx="315" cy="655" r="20"/><path d="M315 675v34M470 760l-14 45h28zM470 805v12"/><circle cx="501" cy="775" r="14"/><path d="M501 790v28"/><circle cx="670" cy="786" r="13"/><path d="M308 850l-14 38h28zM327 510v24M694 500v50"/></g>
  <!-- labels -->
  <g class="map-label" font-size="54">
   <text x="292" y="346" textLength="416" lengthAdjust="spacingAndGlyphs" fill="#6b5b4f" font-style="italic">f Scheldetunnel</text><text x="356" y="517" textLength="346" lengthAdjust="spacingAndGlyphs" fill="#6d9068" font-style="italic">Sint-Annabos</text><text x="36" y="396" fill="#3d9440" font-style="italic" font-size="50">at</text><text x="62" y="963" textLength="190" lengthAdjust="spacingAndGlyphs" fill="#3d9440" font-style="italic" font-size="52">Het Rot</text>
   <g fill="#5b91bd" font-style="italic"><text transform="translate(1442 185) rotate(-42)" font-size="56">Royerssluis</text><text transform="translate(1795 86) rotate(90)" textLength="360" lengthAdjust="spacingAndGlyphs">Kattendijkdok</text><text x="1928" y="228" textLength="222" lengthAdjust="spacingAndGlyphs">Houtdok</text><text transform="translate(2228 128) rotate(90)" textLength="210" lengthAdjust="spacingAndGlyphs">Asiadok</text><text transform="translate(1502 685) rotate(-76)" textLength="196" lengthAdjust="spacingAndGlyphs">Schelde</text><text x="4148" y="52" font-size="52">Albertkanaal</text></g>
   <g fill="#333" font-size="56"><text x="2696" y="352" textLength="226" lengthAdjust="spacingAndGlyphs">Viaduct</text><text x="2602" y="430" textLength="412" lengthAdjust="spacingAndGlyphs">van Merksem</text></g><text x="1350" y="1114" textLength="454" lengthAdjust="spacingAndGlyphs" fill="#3a3a3a" font-size="80">Antwerpen</text>
   <g fill="#c43b5b" font-style="italic"><text x="3136" y="794" textLength="188" lengthAdjust="spacingAndGlyphs">Deurne</text><text x="3216" y="866">2</text><text x="2502" y="65" font-size="46">1</text></g>
  </g>
  <g fill="#f3f2d2" stroke="#c9c991" stroke-width="6"><rect x="1527" y="706" width="199" height="100" rx="9"/><rect x="3386" y="118" width="200" height="100" rx="9"/></g><g font-size="57" fill="#4b4930"><text x="1551" y="774" textLength="144" lengthAdjust="spacingAndGlyphs">N49a</text><text x="3411" y="187" textLength="146" lengthAdjust="spacingAndGlyphs">N130</text></g>
  <!-- marker -->
  <defs><linearGradient id="pin" x1="0" y1="0" x2="0" y2="1"><stop offset="0" stop-color="#4697d2"/><stop offset="1" stop-color="#2174c2"/></linearGradient><radialGradient id="pin-shadow"><stop offset="0" stop-opacity=".55"/><stop offset="1" stop-opacity="0"/></radialGradient></defs>
  <ellipse cx="2234" cy="508" rx="98" ry="28" transform="rotate(-34 2234 508)" fill="url(#pin-shadow)"/><path d="M2157 573L2097 455Q2082 430 2084 407C2087 362 2119 337 2157 337S2228 362 2231 407Q2231 430 2217 455z" fill="url(#pin)" stroke="#2e6c97" stroke-width="5"/><circle cx="2157" cy="409" r="27" fill="#fff" stroke="#2e6c97" stroke-width="5"/>
</svg>
<div class="zoom-control"><a href="#" aria-label="Zoom in"><svg viewBox="0 0 60 60"><path d="M19 34.700H43.700M31.300 23V46.700"/></svg></a><a href="#" aria-label="Zoom out"><svg viewBox="0 0 60 60"><path d="M19 35H43.700"/></svg></a></div>
<div class="attribution"><svg class="flag" viewBox="0 0 29 19"><path fill="#4c7be1" d="M0 0h29v9H0z"/><path fill="#ffd500" d="M0 9h29v10H0z"/></svg><a href="#">Leaflet</a><span>|</span><span>©</span><a href="#">OpenStreetMap</a></div>
</div>
</section>
</main>
<footer class="site-footer"><p>2023 © Alle rechten voorbehouden</p><p>Urban Street Zone I Webtechnologie I <a href="#">AP Hogeschool</a></p></footer>
</body>
</html>
```
FILE: styles.css
```css
* { box-sizing: border-box; margin: 0; padding: 0; }
body { background: #fefefe; color: #646464; font-family: "Liberation Sans", Arial, sans-serif; font-size: 32px; -webkit-text-stroke: 0.6px currentColor; }
a { color: #e6a24f; text-decoration: none; font-size: 28.8px; }
.site-header { height: 669px; padding-top: 90px; background: #01050f; }
.logo { display: block; width: 220px; height: 210px; margin: 0 auto 65px; }
.menu { list-style: none; text-align: center; }
.menu li { height: 90px; line-height: 90px; }
.menu a { display: block; font-size: 27.2px; letter-spacing: 5.3px; }
.content { padding: 122px 64px 160px; }
h2 { height: 40px; line-height: 40px; font-size: 32px; font-weight: 400; letter-spacing: 3.25px; color: #e6a24f; text-shadow: 2px 2px 0 #777; -webkit-text-stroke: 1.1px currentColor; }
form { padding-top: 60px; }
.field { width: 90%; height: 72px; margin-bottom: 61px; padding-top: 1px; border-bottom: 4px solid #646464; color: #e6a24f; font-size: 28.8px; line-height: 34px; }
.field label { display: block; }
.field-message { height: 250px; margin-bottom: 16px; }
.send { display: block; width: 320px; height: 63px; padding: 0 0 6px 1px; border: 4px solid #646464; background: transparent; color: #e6a24f; font-family: inherit; font-size: 28.8px; letter-spacing: 3.4px; -webkit-text-stroke: inherit; }
.info-section { padding-top: 218px; }
address { padding-top: 61px; font-style: normal; line-height: 33px; }
address a { line-height: 1; }
.map { position: relative; height: 360px; margin-top: 2px; overflow: hidden; background: #ddd; }
.map-canvas { display: block; width: 1408px; height: 360px; font-family: "Noto Sans", "Open Sans", sans-serif; -webkit-text-stroke: 0; }
.map-label text { paint-order: stroke; stroke: rgba(255, 255, 255, 0.65); stroke-width: 9px; stroke-linejoin: round; }
.zoom-control { position: absolute; top: 20px; left: 20px; width: 68px; border: 4px solid rgba(0, 0, 0, 0.2); border-radius: 7px; background: #fff; background-clip: padding-box; }
.zoom-control a { display: block; height: 60px; }
.zoom-control a:first-child { border-bottom: 2px solid #ccc; }
.zoom-control svg { display: block; width: 60px; height: 60px; fill: none; stroke: #01040f; stroke-width: 4.500px; }
.attribution { position: absolute; right: 0; bottom: 0; display: flex; align-items: center; width: 393px; height: 40px; padding: 2px 0 0 10px; background: rgba(255, 255, 255, 0.8); color: #333; font-size: 24px; line-height: 38px; white-space: nowrap; }
.attribution a { color: #0078a8; }
.attribution span { margin-left: 7px; -webkit-text-stroke: 0; }
.attribution span + a { margin-left: 6px; }
.flag { width: 29px; height: 19px; margin-right: 8px; }
.site-footer { height: 142px; padding-top: 29px; background: #e6a24f; color: #fff; text-align: center; font-size: 25.6px; line-height: 40px; }
.site-footer p { height: 40px; }
.site-footer a { color: #fff; text-decoration: underline; text-decoration-thickness: 1.500px; line-height: 1; }
```
